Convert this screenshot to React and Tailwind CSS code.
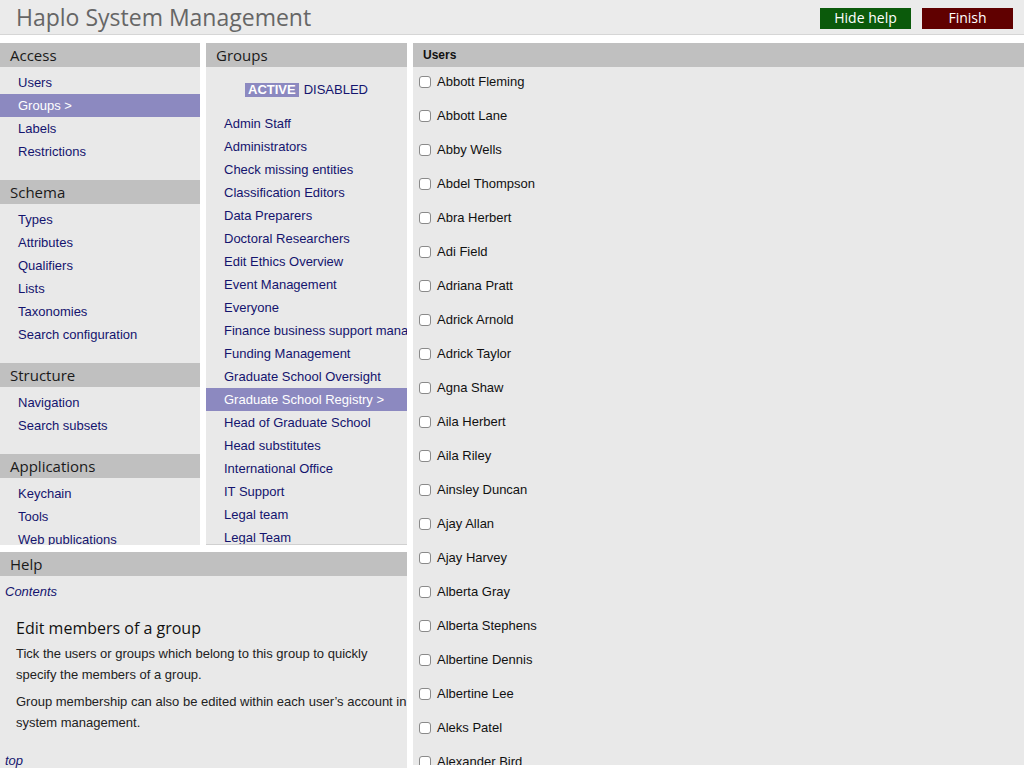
import React from 'react';

const SANS = { fontFamily: '"Liberation Sans", Arial, sans-serif' };
const UI = { fontFamily: '"Open Sans", "DejaVu Sans", sans-serif' };

const NAV = [
  { title: 'Access', items: ['Users', 'Groups >', 'Labels', 'Restrictions'], active: 'Groups >' },
  { title: 'Schema', items: ['Types', 'Attributes', 'Qualifiers', 'Lists', 'Taxonomies', 'Search configuration'] },
  { title: 'Structure', items: ['Navigation', 'Search subsets'] },
  { title: 'Applications', items: ['Keychain', 'Tools', 'Web publications'] },
];

const GROUPS = [
  'Admin Staff', 'Administrators', 'Check missing entities', 'Classification Editors',
  'Data Preparers', 'Doctoral Researchers', 'Edit Ethics Overview', 'Event Management',
  'Everyone', 'Finance business support manager', 'Funding Management',
  'Graduate School Oversight', 'Graduate School Registry >', 'Head of Graduate School',
  'Head substitutes', 'International Office', 'IT Support', 'Legal team', 'Legal Team',
];

const USERS = [
  'Abbott Fleming', 'Abbott Lane', 'Abby Wells', 'Abdel Thompson', 'Abra Herbert',
  'Adi Field', 'Adriana Pratt', 'Adrick Arnold', 'Adrick Taylor', 'Agna Shaw',
  'Aila Herbert', 'Aila Riley', 'Ainsley Duncan', 'Ajay Allan', 'Ajay Harvey',
  'Alberta Gray', 'Alberta Stephens', 'Albertine Dennis', 'Albertine Lee',
  'Aleks Patel', 'Alexander Bird',
];

function PanelHeader({ children }) {
  return (
    <div className="h-[24px] bg-[#c0c0c0] pl-[10px] flex items-center text-[15px] text-[#1a1a1a] shrink-0" style={UI}>
      {children}
    </div>
  );
}

function NavItem({ label, active }) {
  return (
    <div
      className={
        'h-[23px] pl-[18px] flex items-center text-[13px] whitespace-nowrap ' +
        (active ? 'bg-[#8c89c0] text-white' : 'text-[#14146e]')
      }
      style={SANS}
    >
      {label}
    </div>
  );
}

export default function App() {
  return (
    <div className="w-[1024px] h-[768px] overflow-hidden bg-white">
      {/* top bar */}
      <div className="h-[35px] bg-[#ebebeb] border-b border-[#d6d6d6] flex items-center pl-[16px] pr-[11px]">
        <div className="flex-1 text-[23px] text-[#666666] leading-none" style={UI}>
          Haplo System Management
        </div>
        <button className="mt-[2px] w-[91px] h-[21px] bg-[#0b5a0b] text-white text-[14px] leading-none" style={UI}>
          Hide help
        </button>
        <button className="mt-[2px] w-[91px] h-[21px] bg-[#600000] text-white text-[14px] leading-none ml-[11px]" style={UI}>
          Finish
        </button>
      </div>

      <div className="flex items-start mt-[8px] h-[725px]">
        <div className="w-[407px] h-[725px] flex flex-col">
          <div className="flex gap-[6px] h-[502px]">
            {/* left nav */}
            <div className="w-[200px] bg-[#e9e9e9] overflow-hidden">
              {NAV.map((sec, i) => (
                <div key={sec.title} className={i > 0 ? 'mt-[17px]' : ''}>
                  <PanelHeader>{sec.title}</PanelHeader>
                  <div className="pt-[4px]">
                    {sec.items.map((it) => (
                      <NavItem key={it} label={it} active={it === sec.active} />
                    ))}
                  </div>
                </div>
              ))}
            </div>

            {/* groups */}
            <div className="w-[201px] bg-[#e9e9e9] overflow-hidden border-b border-[#d0d0d0]">
              <PanelHeader>Groups</PanelHeader>
              <div className="h-[45px] flex items-center justify-center gap-[5px] text-[13px]" style={SANS}>
                <span className="bg-[#8c89c0] text-white font-bold px-[3px] leading-[14px]">ACTIVE</span>
                <span className="text-[#14146e]">DISABLED</span>
              </div>
              <div>
                {GROUPS.map((g) => (
                  <NavItem key={g} label={g} active={g === 'Graduate School Registry >'} />
                ))}
              </div>
            </div>
          </div>

          {/* help */}
          <div className="mt-[7px] flex-1 bg-[#e9e9e9] overflow-hidden">
            <PanelHeader>Help</PanelHeader>
            <div className="pl-[5px] pt-[6px] text-[13px] italic text-[#14146e]" style={SANS}>Contents</div>
            <div className="pl-[16px] pt-[15px] pr-[2px]">
              <div className="text-[16px] text-[#111] leading-[22px]" style={UI}>Edit members of a group</div>
              <p className="text-[13px] text-[#222] leading-[21px] mt-[4px] whitespace-nowrap" style={SANS}>
                Tick the users or groups which belong to this group to quickly<br />
                specify the members of a group.
              </p>
              <p className="text-[13px] text-[#222] leading-[21px] mt-[6px] whitespace-nowrap" style={SANS}>
                Group membership can also be edited within each user’s account in<br />
                system management.
              </p>
            </div>
            <div className="pl-[5px] mt-[18px] text-[13px] italic text-[#14146e]" style={SANS}>top</div>
          </div>
        </div>

        {/* users */}
        <div className="ml-[6px] flex-1 h-[722px] bg-[#e9e9e9] overflow-hidden">
          <div className="h-[24px] bg-[#c0c0c0] pl-[10px] flex items-center text-[12px] font-bold text-[#111]" style={SANS}>
            Users
          </div>
          <div className="pt-[4px]">
            {USERS.map((u) => (
              <label key={u} className="h-[34px] flex items-start pt-[2px] pl-[6px] text-[13px] text-[#111]" style={SANS}>
                <span className="w-[12px] h-[12px] mt-[3px] rounded-[3px] border border-[#8a8a8a] bg-white shrink-0" />
                <span className="ml-[6px] leading-[18px]">{u}</span>
              </label>
            ))}
          </div>
        </div>
      </div>
    </div>
  );
}
